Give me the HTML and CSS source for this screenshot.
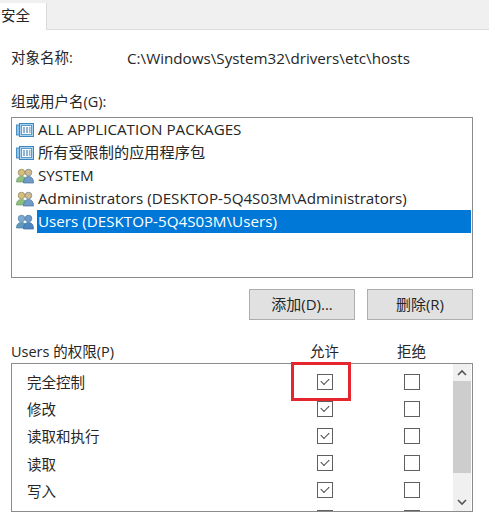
FILE: index.html
```html
<!DOCTYPE html>
<html lang="zh-CN">
<head>
  <meta charset="UTF-8" />
  <title>hosts 属性</title>
  <link rel="stylesheet" href="styles.css">
</head>
<body>

  <svg class="defs" width="0" height="0">
    <symbol id="icon-package" viewBox="0 0 18 16">
      <rect x="0.5" y="3" width="4" height="10" fill="#8fc3e8" stroke="#4a8fc4"/>
      <rect x="3.5" y="1.5" width="14" height="13" fill="#a9d3f0" stroke="#3f86bd"/>
      <rect x="5.5" y="3.5" width="10" height="9" fill="#f4fafe" stroke="#5c9ccb"/>
      <path d="M7 6h2M10 6h2M13 6h1.500M7 8h2M10 8h2M13 8h1.500M7 10h2M10 10h2M13 10h1.500" stroke="#2d6fa6" fill="none"/>
    </symbol>
    <symbol id="icon-group" viewBox="0 0 18 16">
      <circle cx="5.500" cy="4.500" r="3.300" fill="#d9bd7a" stroke="#8c8a5a" stroke-width="0.700"/>
      <path d="M0.500 14c0-4 2-5.500 5-5.500s5 1.500 5 5.500z" fill="#8fbf7f" stroke="#6c9a66" stroke-width="0.700"/>
      <circle cx="12.500" cy="4.500" r="3.300" fill="#d2b98a" stroke="#5d7fa3" stroke-width="0.700"/>
      <path d="M7.500 15c0-4.500 2-6.500 5-6.500s5 2 5 6.500z" fill="#6f9bc9" stroke="#47709e" stroke-width="0.700"/>
    </symbol>
    <symbol id="icon-group-selected" viewBox="0 0 18 16">
      <circle cx="5.500" cy="4.500" r="3.300" fill="#7fa8cf" stroke="#4f7fac" stroke-width="0.700"/>
      <path d="M0.500 14c0-4 2-5.500 5-5.500s5 1.500 5 5.500z" fill="#5f9bb8" stroke="#4a7fa3" stroke-width="0.700"/>
      <circle cx="12.500" cy="4.500" r="3.300" fill="#6d9cc9" stroke="#3f72a6" stroke-width="0.700"/>
      <path d="M7.500 15c0-4.500 2-6.500 5-6.500s5 2 5 6.500z" fill="#4f86c0" stroke="#35689f" stroke-width="0.700"/>
    </symbol>
  </svg>

  <div class="tabs">
    <div class="tab">安全</div>
  </div>

  <main class="panel">
    <div class="object-row">
      <span class="object-label">对象名称:</span>
      <span>C:\Windows\System32\drivers\etc\hosts</span>
    </div>

    <div class="group-label">组或用户名(G):</div>
    <ul class="user-list">
      <li><svg class="icon"><use href="#icon-package"/></svg><span class="name">ALL APPLICATION PACKAGES</span></li>
      <li><svg class="icon"><use href="#icon-package"/></svg><span class="name">所有受限制的应用程序包</span></li>
      <li><svg class="icon"><use href="#icon-group"/></svg><span class="name">SYSTEM</span></li>
      <li><svg class="icon"><use href="#icon-group"/></svg><span class="name">Administrators (DESKTOP-5Q4S03M\Administrators)</span></li>
      <li class="selected"><svg class="icon"><use href="#icon-group-selected"/></svg><span class="name">Users (DESKTOP-5Q4S03M\Users)</span></li>
    </ul>

    <div class="buttons">
      <button class="btn">添加(D)...</button>
      <button class="btn">删除(R)</button>
    </div>

    <div class="perm-head">
      <span class="perm-title">Users 的权限(P)</span>
      <span class="perm-col">允许</span>
      <span class="perm-col">拒绝</span>
    </div>

    <div class="perm-box">
      <div class="perm-rows">
        <div class="perm-row"><span class="perm-name">完全控制</span><span class="check on"></span><span class="check"></span></div>
        <div class="perm-row"><span class="perm-name">修改</span><span class="check on"></span><span class="check"></span></div>
        <div class="perm-row"><span class="perm-name">读取和执行</span><span class="check on"></span><span class="check"></span></div>
        <div class="perm-row"><span class="perm-name">读取</span><span class="check on"></span><span class="check"></span></div>
        <div class="perm-row"><span class="perm-name">写入</span><span class="check on"></span><span class="check"></span></div>
        <div class="perm-row"><span class="perm-name"></span><span class="check"></span><span class="check"></span></div>
      </div>
      <div class="scrollbar">
        <svg class="arrow" viewBox="0 0 18 17"><path d="M5 11l4-4 4 4" fill="none" stroke="#555" stroke-width="1.600"/></svg>
        <div class="thumb"></div>
        <svg class="arrow" viewBox="0 0 18 17"><path d="M5 6l4 4 4-4" fill="none" stroke="#555" stroke-width="1.600"/></svg>
      </div>
    </div>

    <div class="highlight"></div>
  </main>

</body>
</html>
```

FILE: styles.css
```css
html, body {
  height: 519px;
  overflow: hidden;
}

body {
  margin: 0;
  background-color: #fff;
  color: #262626;
  font-family: "Open Sans", "Noto Sans CJK SC", sans-serif;
  font-size: 15.200px;
  position: relative;
}

.defs {
  position: absolute;
}

/* tab strip */
.tabs {
  height: 30px;
  padding-top: 3px;
  background-color: #f0f0f0;
  border-bottom: 1px solid #dcdcdc;
  box-sizing: border-box;
}

.tab {
  width: 47px;
  height: 27px;
  box-sizing: border-box;
  background-color: #fff;
  border-right: 1px solid #d9d9d9;
  line-height: 26px;
  font-size: 14.500px;
  padding-left: 1px;
}

.panel {
  padding: 0 16px 0 11px;
}

.object-row {
  display: flex;
  margin-top: 18px;
  line-height: 20px;
}

.object-label {
  width: 116px;
  font-size: 14.500px;
}

.group-label {
  margin-top: 24px;
  line-height: 20px;
  font-size: 14.500px;
}

/* user list */
.user-list {
  list-style: none;
  margin: 5px 0 0 0;
  padding: 0 1px 0 4px;
  height: 161px;
  box-sizing: border-box;
  border: 1px solid #8c8c8c;
}

.user-list li {
  display: flex;
  align-items: center;
  height: 23px;
}

.icon {
  width: 18px;
  height: 16px;
  margin-right: 3px;
  flex-shrink: 0;
}

.name {
  padding-left: 1px;
  flex: 1;
  line-height: 23px;
  white-space: nowrap;
}

.user-list li.selected .name {
  background-color: #0078d7;
  color: #fff;
}

/* add / remove */
.buttons {
  display: flex;
  justify-content: flex-end;
  gap: 12px;
  margin-top: 11px;
}

.btn {
  width: 106px;
  height: 31px;
  padding: 0 0 2px 0;
  background-color: #e1e1e1;
  border: 1px solid #adadad;
  color: #262626;
  font-family: inherit;
  font-size: 15px;
}

/* permissions */
.perm-head {
  display: flex;
  align-items: center;
  margin-top: 20px;
  height: 20px;
  font-size: 14.500px;
}

.perm-title {
  width: 270px;
}

.perm-col {
  width: 87px;
  text-align: center;
}

.perm-box {
  display: flex;
  height: 149px;
  box-sizing: border-box;
  margin-top: 3px;
  border: 1px solid #8c8c8c;
  overflow: hidden;
}

.perm-rows {
  flex: 1;
  min-width: 0;
  padding: 4px 0 0 15px;
}

.perm-row {
  display: flex;
  align-items: center;
  height: 27.200px;
  font-size: 14.500px;
}

.perm-name {
  width: 290px;
  flex-shrink: 0;
}

.check {
  width: 16px;
  height: 16px;
  flex-shrink: 0;
  box-sizing: border-box;
  border: 1px solid #5f5f5f;
  background-color: #fff;
  margin-right: 71px;
  position: relative;
}

.check.on::after {
  content: "";
  position: absolute;
  left: 3px;
  top: 1px;
  width: 7px;
  height: 4px;
  border-left: 1.500px solid #444;
  border-bottom: 1.500px solid #444;
  transform: translateY(2px) rotate(-45deg);
}

.scrollbar {
  width: 18px;
  flex-shrink: 0;
  display: flex;
  flex-direction: column;
  background-color: #f0f0f0;
  margin-right: 1px;
}

.arrow {
  width: 18px;
  height: 17px;
  flex-shrink: 0;
}

.thumb {
  flex: 1;
  background-color: #cdcdcd;
  margin-bottom: 21px;
}

/* red annotation box */
.highlight {
  position: absolute;
  left: 291px;
  top: 362px;
  width: 60px;
  height: 39px;
  box-sizing: border-box;
  border: 3px solid #e5262e;
}
```
